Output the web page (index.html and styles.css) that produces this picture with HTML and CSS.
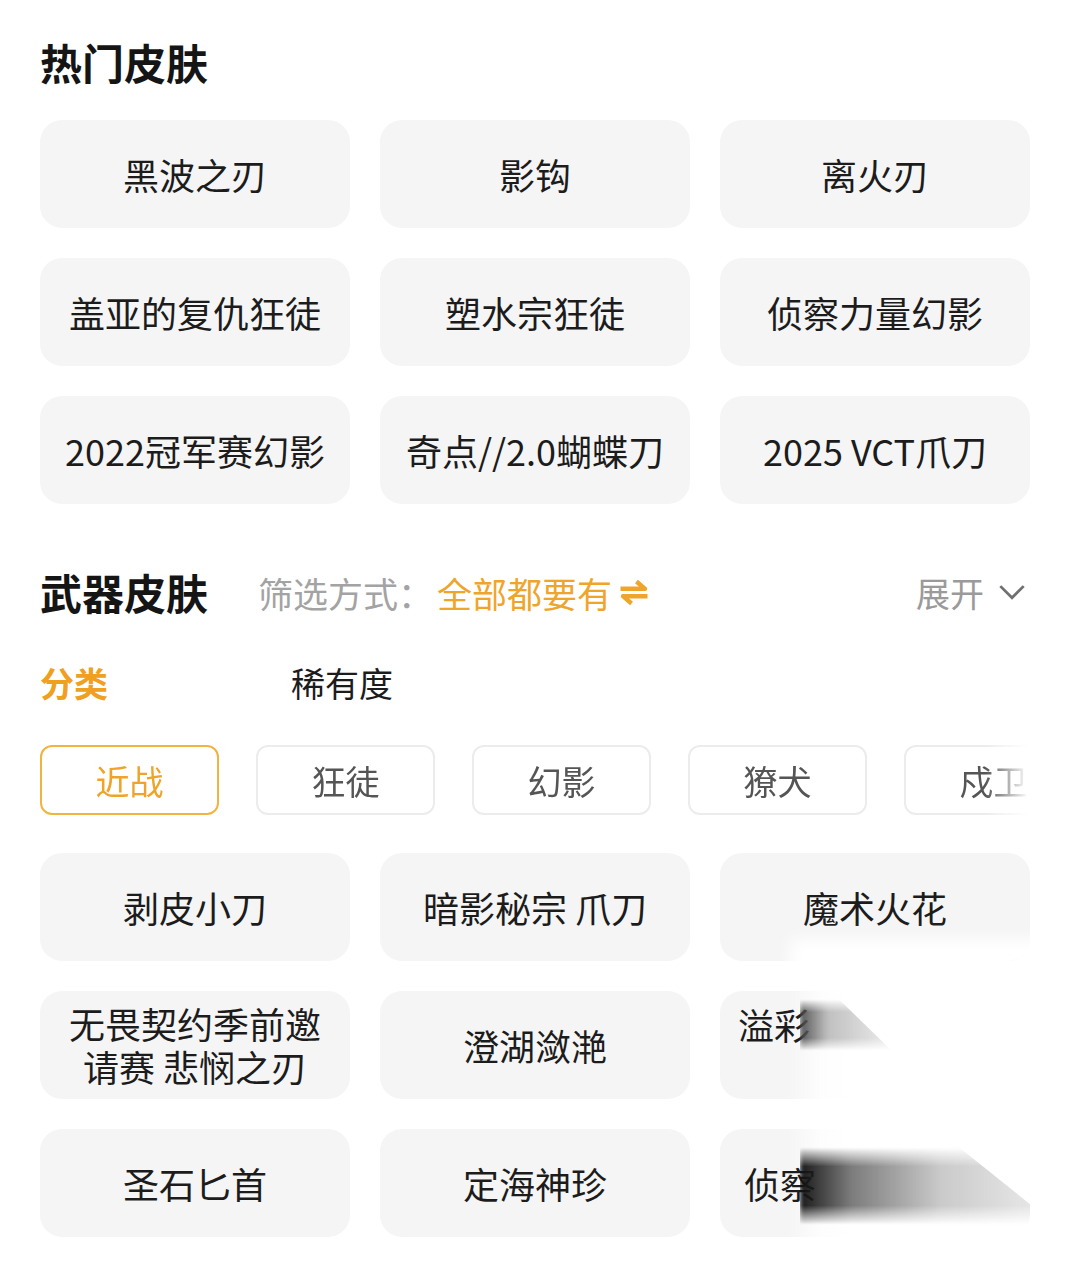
FILE: index.html
```html
<!DOCTYPE html>
<html lang="zh-CN">
<head>
    <meta charset="UTF-8">
    <title>皮肤</title>
    <link rel="stylesheet" href="styles.css">
</head>
<body>
    <div class="page">
        <h2 class="section-title">热门皮肤</h2>
        <div class="card-grid">
            <div class="card">黑波之刃</div>
            <div class="card">影钩</div>
            <div class="card">离火刃</div>
            <div class="card">盖亚的复仇狂徒</div>
            <div class="card">塑水宗狂徒</div>
            <div class="card">侦察力量幻影</div>
            <div class="card">2022冠军赛幻影</div>
            <div class="card">奇点//2.0蝴蝶刀</div>
            <div class="card">2025 VCT爪刀</div>
        </div>

        <div class="weapon-header">
            <h2 class="section-title">武器皮肤</h2>
            <span class="filter-label">筛选方式：</span>
            <span class="filter-value">全部都要有
                <svg class="swap-icon" viewBox="0 0 26 22" width="32" height="27">
                    <path d="M2 8 H22 L15 2" fill="none" stroke="currentColor" stroke-width="3.6" stroke-linejoin="round"/>
                    <path d="M24 14 H4 L11 20" fill="none" stroke="currentColor" stroke-width="3.6" stroke-linejoin="round"/>
                </svg>
            </span>
            <span class="expand">展开
                <svg class="chevron" viewBox="0 0 26 16" width="28" height="17">
                    <path d="M2 2 L13 13 L24 2" fill="none" stroke="currentColor" stroke-width="2.6"/>
                </svg>
            </span>
        </div>

        <div class="tabs">
            <span class="tab active">分类</span>
            <span class="tab">稀有度</span>
        </div>

        <div class="chips">
            <span class="chip selected">近战</span>
            <span class="chip">狂徒</span>
            <span class="chip">幻影</span>
            <span class="chip">獠犬</span>
            <span class="chip">戍卫</span>
        </div>

        <div class="card-grid weapons">
            <div class="card">剥皮小刀</div>
            <div class="card">暗影秘宗 爪刀</div>
            <div class="card">魔术火花<span class="wash-low"></span></div>
            <div class="card two-line">无畏契约季前邀<br>请赛 悲悯之刃</div>
            <div class="card">澄湖潋滟</div>
            <div class="card washed top-left">溢彩<span class="smear smear-short"></span></div>
            <div class="card">圣石匕首</div>
            <div class="card">定海神珍</div>
            <div class="card washed left">侦察<span class="smear smear-long"></span></div>
        </div>
    </div>
</body>
</html>
```

FILE: styles.css
```css
* {
    box-sizing: border-box;
}

body {
    margin: 0;
    background-color: #ffffff;
    color: #1c1c1c;
    font-family: "Noto Sans CJK SC", "Noto Sans", sans-serif;
}

.page {
    width: 1065px;
    padding: 35px 35px 40px 40px;
}

.section-title {
    margin: 0;
    font-size: 42px;
    line-height: 54px;
    font-weight: 700;
    color: #151515;
}

.card-grid {
    display: grid;
    grid-template-columns: repeat(3, 1fr);
    gap: 30px;
    margin-top: 31px;
}

.card {
    position: relative;
    height: 108px;
    display: flex;
    align-items: center;
    justify-content: center;
    text-align: center;
    background-color: #f5f5f5;
    border-radius: 22px;
    font-size: 36px;
    line-height: 42px;
    color: #1c1c1c;
    overflow: hidden;
}

.card.two-line {
    line-height: 43px;
}

/* washed-out / smeared cards in the last column */
.card.washed {
    background: linear-gradient(90deg, #f5f5f5 0, #f5f5f5 68px, #fdfdfd 100px, #ffffff 130px);
}

.card.left {
    justify-content: flex-start;
    padding-left: 24px;
}

.card.top-left {
    align-items: flex-start;
    justify-content: flex-start;
    padding: 12px 0 0 18px;
}

.wash-low {
    position: absolute;
    left: 70px;
    right: -20px;
    top: 86px;
    bottom: -20px;
    background: #ffffff;
    filter: blur(8px);
}

.smear {
    position: absolute;
    filter: blur(2px);
    -webkit-mask-image: linear-gradient(180deg, transparent 0, #000 25%, #000 75%, transparent 100%);
    mask-image: linear-gradient(180deg, transparent 0, #000 25%, #000 75%, transparent 100%);
}

.smear-short {
    left: 80px;
    top: 8px;
    width: 92px;
    height: 52px;
    background: linear-gradient(90deg, rgba(70,70,70,0.9) 0, rgba(150,150,150,0.6) 30%, rgba(200,200,200,0.35) 100%);
    clip-path: polygon(0 0, 42% 0, 100% 100%, 0 100%);
}

.smear-long {
    left: 80px;
    top: 18px;
    width: 256px;
    height: 78px;
    background: linear-gradient(90deg, rgba(15,15,15,0.95) 0, rgba(80,80,80,0.75) 20%, rgba(150,150,150,0.5) 55%, rgba(205,205,205,0.35) 100%);
    clip-path: polygon(0 0, 62% 0, 100% 100%, 0 100%);
}

.weapon-header {
    display: flex;
    align-items: center;
    margin-top: 61px;
}

.filter-label {
    margin-left: 50px;
    font-size: 35px;
    color: #a3a3a3;
}

.filter-value {
    display: flex;
    align-items: center;
    margin-left: 4px;
    font-size: 35px;
    color: #efa52b;
}

.swap-icon {
    margin-left: 6px;
}

.expand {
    display: flex;
    align-items: center;
    margin-left: auto;
    margin-right: 4px;
    font-size: 34px;
    color: #9a9a9a;
}

.chevron {
    margin-left: 14px;
    color: #707070;
}

.tabs {
    display: flex;
    margin-top: 40px;
    font-size: 34px;
    line-height: 48px;
}

.tab {
    width: 251px;
    color: #1c1c1c;
}

.tab.active {
    color: #efa020;
    font-weight: 700;
}

.chips {
    display: flex;
    gap: 37px;
    margin-top: 38px;
    overflow: hidden;
    width: 988px;
    -webkit-mask-image: linear-gradient(90deg, #000 0, #000 945px, transparent 988px);
    mask-image: linear-gradient(90deg, #000 0, #000 945px, transparent 988px);
}

.chip {
    flex: 0 0 179px;
    height: 70px;
    display: flex;
    align-items: center;
    justify-content: center;
    border: 2px solid #ececec;
    border-radius: 12px;
    font-size: 34px;
    color: #555555;
}

.chip.selected {
    border-color: #f2b440;
    color: #eea42a;
}

.weapons {
    margin-top: 38px;
}
```
